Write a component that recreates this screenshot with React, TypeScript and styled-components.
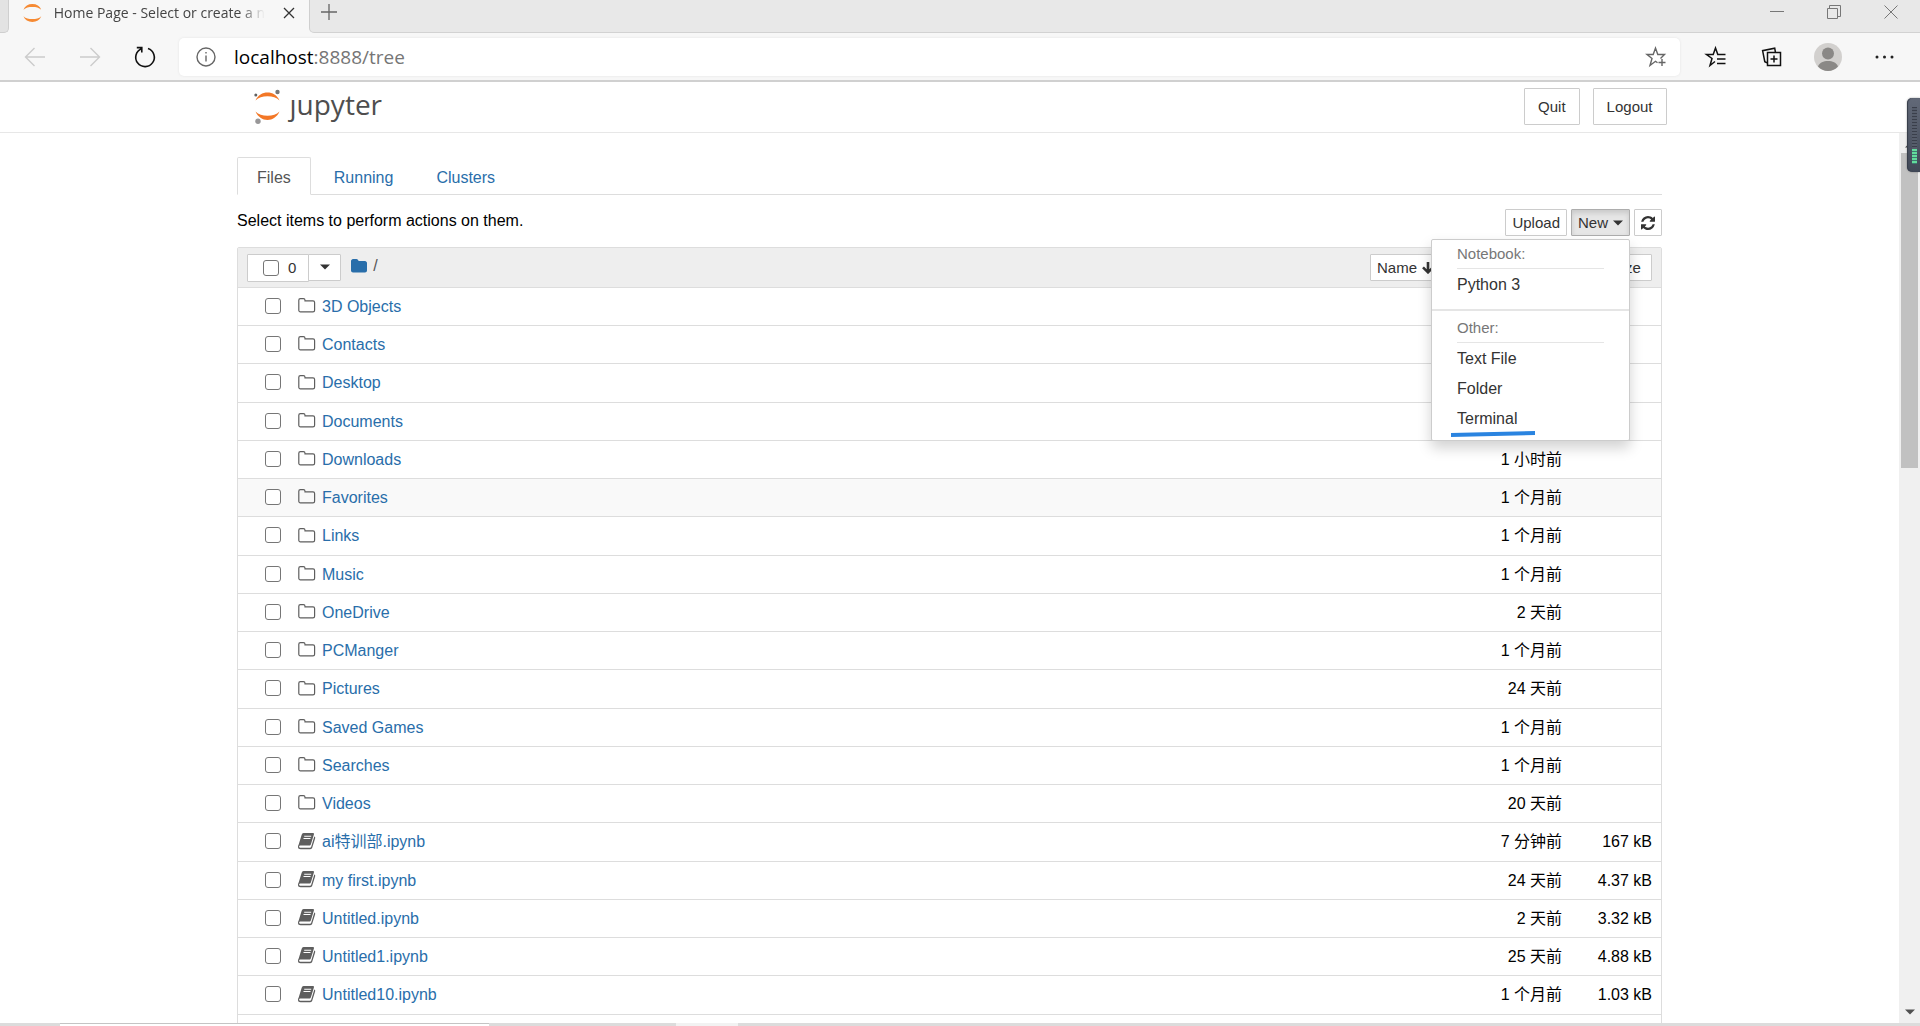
import React from 'react';
import styled, { createGlobalStyle, css } from 'styled-components';

const GlobalStyle = createGlobalStyle`
  *, *::before, *::after { box-sizing: border-box; }
  body {
    margin: 0;
    overflow: hidden;
    background: #fff;
    color: #000;
    font: 16px/24px "Liberation Sans", "Noto Sans CJK SC", Arial, sans-serif;
  }
  button { font: inherit; cursor: pointer; }
  a { color: #296eaa; text-decoration: none; }
`;

const BORDER = '#ddd';

const Window = styled.div`
  display: flex;
  flex-direction: column;
  height: 100vh;
  overflow: hidden;
`;

/* ---------- browser chrome ---------- */

const TabStrip = styled.div`
  display: flex;
  align-items: stretch;
  flex: none;
  height: 33px;
  background: #f7f7f7;
`;

const PreviousTab = styled.div`
  width: 9px;
  border-right: 1px solid #cfcfcf;
  border-bottom: 1px solid #cfcfcf;
  border-bottom-right-radius: 5px;
  background: #e3e3e3;
`;

const BrowserTab = styled.div`
  display: flex;
  align-items: center;
  gap: 12px;
  width: 300px;
  padding: 0 8px 8px 14px;
  background: #f7f7f7;
`;

const TabTitle = styled.span`
  flex: 1;
  white-space: nowrap;
  color: #444;
  font: 14px/24px "Open Sans", "Noto Sans", sans-serif;
  mask-image: linear-gradient(to right, #000 88%, transparent 100%);
`;

const StripRest = styled.div`
  display: flex;
  align-items: center;
  justify-content: space-between;
  flex: 1;
  padding: 0 17px 9px 10px;
  border-left: 1px solid #cfcfcf;
  border-bottom: 1px solid #d2d2d2;
  border-bottom-left-radius: 5px;
  background: #e8e8e8;
`;

const WindowControls = styled.div`
  display: flex;
  align-items: center;
  gap: 33px;
`;

const IconButton = styled.button<{ $size?: number }>`
  display: flex;
  align-items: center;
  justify-content: center;
  flex: none;
  width: ${(p) => p.$size ?? 24}px;
  height: ${(p) => p.$size ?? 24}px;
  padding: 0;
  border: 0;
  background: none;
`;

const NavBar = styled.div`
  display: flex;
  align-items: center;
  flex: none;
  height: 49px;
  padding: 0 22px 0 23px;
  border-bottom: 2px solid #d0d0d0;
  background: #f7f7f7;
`;

const NavButtons = styled.div`
  display: flex;
  gap: 31px;
  margin-right: 22px;
`;

const AddressBar = styled.label`
  display: flex;
  align-items: center;
  flex: 1;
  height: 38px;
  padding: 0 12px 0 15px;
  border-radius: 5px;
  background: #fff;
  box-shadow: 0 0 3px rgba(0, 0, 0, 0.08);
`;

const AddressText = styled.div`
  flex: 1;
  margin-left: 16px;
  color: #767676;
  font: 19px/28px "Open Sans", "Noto Sans", sans-serif;
`;

const Host = styled.span`
  color: #000;
`;

const ToolButtons = styled.div`
  display: flex;
  align-items: center;
  gap: 28px;
  margin-left: 22px;
`;

/* ---------- notebook page ---------- */

const Page = styled.div`
  display: flex;
  flex-direction: column;
  flex: 1;
  min-height: 0;
`;

const Header = styled.header`
  flex: none;
  height: 51px;
  border-bottom: 1px solid #e7e7e7;
`;

const HeaderInner = styled.div`
  display: flex;
  align-items: flex-start;
  gap: 13px;
  width: 1429px;
  max-width: 100%;
  margin: 0 auto;
  padding: 6px 8px 0;
`;

const LogoLink = styled.a`
  display: flex;
  margin-right: auto;
  color: #4e4e4e;
`;

const LogoText = styled.span`
  margin-left: 8px;
  color: #4e4e4e;
  font: 500 28px/32px "Open Sans", "Noto Sans", sans-serif;
`;

const Button = styled.button<{ $large?: boolean; $active?: boolean }>`
  display: inline-flex;
  align-items: center;
  justify-content: center;
  gap: 5px;
  height: ${(p) => (p.$large ? 37 : 27)}px;
  padding: 0 ${(p) => (p.$large ? 13 : 6)}px;
  border: 1px solid #ccc;
  border-radius: 1px;
  background: #fff;
  color: #333;
  font-size: 15px;
  white-space: nowrap;
  ${(p) =>
    p.$active &&
    css`
      border-color: #adadad;
      background: #e6e6e6;
      box-shadow: inset 0 3px 5px rgba(0, 0, 0, 0.125);
    `}
`;

const Site = styled.div`
  display: flex;
  flex: 1;
  min-height: 0;
  overflow: hidden;
`;

const Content = styled.main`
  flex: 1;
  min-width: 0;
`;

const Container = styled.div`
  width: 1425px;
  max-width: 100%;
  margin: 0 auto;
  padding-top: 24px;
`;

const TabList = styled.nav`
  display: flex;
  gap: 3px;
  height: 38px;
  border-bottom: 1px solid ${BORDER};
`;

const TabLink = styled.a<{ $active?: boolean }>`
  height: 38px;
  padding: 8px 19px 0;
  border: 1px solid transparent;
  border-radius: 2px 2px 0 0;
  ${(p) =>
    p.$active &&
    css`
      border-color: ${BORDER};
      border-bottom-color: #fff;
      background: #fff;
      color: #555;
    `}
`;

const Toolbar = styled.div`
  display: flex;
  align-items: flex-start;
  justify-content: space-between;
  height: 27px;
  margin: 14px 0 11px;
`;

const ToolbarButtons = styled.div`
  display: flex;
  gap: 4px;
`;

const MenuAnchor = styled.div`
  position: relative;
`;

const Menu = styled.div`
  position: absolute;
  top: 30px;
  right: 0;
  z-index: 2;
  width: 199px;
  padding: 0 0 7px;
  border: 1px solid #ccc;
  border-radius: 2px;
  background: #fff;
  box-shadow: 0 7px 14px rgba(0, 0, 0, 0.18);
`;

const MenuHeading = styled.div`
  height: 29px;
  margin: 0 25px;
  padding-top: 2px;
  border-bottom: 1px solid #e5e5e5;
  color: #777;
  font-size: 15px;
`;

const MenuDivider = styled.div`
  height: 2px;
  margin: 10px 0 3px;
  background: #e5e5e5;
`;

const MenuItem = styled.a`
  position: relative;
  display: block;
  height: 30px;
  padding: 4px 25px 0;
  color: #333;
`;

const Highlight = styled.svg`
  position: absolute;
  left: 19px;
  top: 28px;
`;

const FileTable = styled.table`
  width: 100%;
  table-layout: fixed;
  border-collapse: separate;
  border-spacing: 0;
  border: 1px solid ${BORDER};
  border-radius: 2px 2px 0 0;
`;

const HeadCell = styled.th<{ $width?: number }>`
  width: ${(p) => (p.$width ? `${p.$width}px` : 'auto')};
  height: 40px;
  padding: 0 9px 0 0;
  border-bottom: 1px solid ${BORDER};
  background: #eee;
  font-weight: normal;
  text-align: right;
`;

const HeadTools = styled.div`
  display: flex;
  align-items: center;
  padding-left: 9px;
`;

const SelectAll = styled.label`
  display: flex;
  align-items: center;
  gap: 9px;
  height: 28px;
  padding: 0 12px 0 15px;
  border: 1px solid #ccc;
  border-radius: 1px 0 0 1px;
  background: #fff;
  color: #333;
  font-size: 15px;
`;

const SelectMenu = styled(Button)`
  width: 33px;
  margin: 0 10px 1px -1px;
`;

const Crumb = styled.span`
  display: flex;
  align-items: center;
  gap: 6px;
  margin-right: auto;
  padding-bottom: 3px;
  color: #555;
`;

const Checkbox = styled.input.attrs({ type: 'checkbox' })`
  appearance: none;
  flex: none;
  width: 16px;
  height: 16px;
  margin: 0;
  border: 1px solid #767676;
  border-radius: 3px;
  background: #fff;
`;

const Row = styled.tr<{ $hover?: boolean }>`
  height: 38px;
  background: ${(p) => (p.$hover ? '#f9f9f9' : '#fff')};
  &:nth-child(4n + 3) {
    height: 39px;
  }
`;

const Cell = styled.td`
  padding: 0 9px 0 0;
  border-bottom: 1px solid ${BORDER};
  text-align: right;
  white-space: nowrap;
`;

const NameCell = styled.div`
  display: flex;
  align-items: center;
  padding-left: 27px;

  ${Checkbox} {
    margin-bottom: 2px;
  }
`;

const FileIcon = styled.svg`
  flex: none;
  width: 18px;
  height: 18px;
  margin: 0 6px 3px 17px;
`;

/* ---------- scroll bar and overlays ---------- */

const ScrollBar = styled.div`
  display: flex;
  flex-direction: column;
  align-items: center;
  justify-content: space-between;
  flex: none;
  width: 21px;
  padding: 9px 0 8px;
  background: #f0f0f0;
`;

const ScrollThumb = styled.div`
  width: 17px;
  height: 315px;
  margin: 5px 0 auto;
  background: #c1c1c1;
`;

const LevelMeter = styled.div`
  position: absolute;
  top: 98px;
  right: 0;
  z-index: 3;
  width: 13px;
  height: 74px;
  padding: 9px 3px 8px 5px;
  border-radius: 5px 0 0 5px;
  background: linear-gradient(#626978, #414857);
  box-shadow: inset 1px 0 1px #363c49, 0 0 2px rgba(0, 0, 0, 0.4);
`;

const LevelIdle = styled.div`
  height: 42px;
  background: repeating-linear-gradient(#3a3f4b 0 1px, #565d6b 1px 3px);
`;

const LevelLit = styled.div`
  height: 15px;
  background: repeating-linear-gradient(#62dc9c 0 2px, #3f7a70 2px 3px);
`;

const TaskEdge = styled.div`
  display: flex;
  flex: none;
  height: 3px;
  background: #dcdcdc;
`;

const TaskItem = styled.div<{ $grow: number; $tone: string; $line?: boolean }>`
  flex: ${(p) => p.$grow} 1 0;
  border-top: ${(p) => (p.$line ? '1px solid #c4c4c4' : '0')};
  background: ${(p) => p.$tone};
`;

/* ---------- icons ---------- */

const Line = ({ size = 24, color = '#111', w = 1, children }: {
  size?: number; color?: string; w?: number; children: React.ReactNode;
}) => (
  <svg width={size} height={size} viewBox={`0 0 ${size} ${size}`} fill="none" stroke={color} strokeWidth={w} aria-hidden>
    {children}
  </svg>
);

const Favicon = () => (
  <svg width="20" height="20" viewBox="0 0 20 20" fill="#f68a33" aria-hidden>
    <path d="M0.5 6.5C2 2.5 5.5.5 10 .5s8 2 9.500 6C17 4 14 3.500 10 3.500S3 4 .5 6.500z" />
    <path d="M.5 13.500c1.500 4 5 6 9.500 6s8-2 9.500-6c-2.500 2.500-5.500 3-9.500 3s-7-.5-9.500-3z" />
  </svg>
);

const JupyterMark = () => (
  <svg width="28" height="36" viewBox="0 0 28 36" aria-hidden>
    <path fill="#f37726" d="M1.500 12.500C4 7 8.500 4.500 13.500 4.500S23 7 25.500 12.500C22.500 9.500 18.500 8.300 13.500 8.300S4.500 9.500 1.500 12.500z" />
    <path fill="#f37726" d="M1.500 23.500C4 29 8.500 32 13.500 32s9.500-3 12-8.500C22.500 26.500 18.500 27.800 13.500 27.800S4.500 26.500 1.500 23.500z" />
    <circle cx="23.500" cy="4" r="2.200" fill="#767677" />
    <circle cx="1.800" cy="7" r="1.500" fill="#616161" />
    <circle cx="4" cy="33.300" r="2.700" fill="#989798" />
  </svg>
);

const Caret = ({ color = '#333' }: { color?: string }) => (
  <svg width="10" height="6" viewBox="0 0 10 6" aria-hidden><path fill={color} d="M0 0.500h10L5 5.500z" /></svg>
);

const FolderOpen = () => (
  <FileIcon viewBox="0 0 18 18" fill="none" stroke="#5e5e5e" strokeWidth="1.200" aria-hidden>
    <path d="M.8 14.200V4.200c0-.9.700-1.600 1.600-1.600h3c.9 0 1.600.7 1.600 1.600v.6h8c.9 0 1.600.7 1.600 1.600v7.800c0 .9-.7 1.600-1.600 1.600H2.400c-.9 0-1.600-.7-1.600-1.600z" />
  </FileIcon>
);

const Book = () => (
  <FileIcon viewBox="0 0 18 18" aria-hidden>
    <path fill="#5e5e5e" d="M5.600 1h9.300c.9 0 1.300.6 1 1.500l-3 9.700c-.2.800-.8 1.300-1.700 1.300H2.300c-.8 0-1.200.3-1.200.9 0 .9.700 1.300 1.700 1.300h9.200c.6 0 1-.3 1.200-.9l3.100-10.300c.9.400 1.100 1 .8 1.900l-2.800 9.200c-.3.900-1.100 1.600-2.100 1.600H2.600C1 17.200 0 16.200 0 14.900c0-1 .4-1.500.7-2.300L3.600 3C4 1.800 4.600 1 5.600 1z" />
    <path stroke="#fff" strokeWidth="1.100" d="M6.200 4.200h7M5.500 6.500h7" />
  </FileIcon>
);

const Refresh = () => (
  <svg width="14" height="14" viewBox="0 0 1536 1536" aria-hidden>
    <path fill="#333" d="M1511 928q0 5-1 7-64 268-268 434.500T764 1536q-146 0-282.500-55T238 1324l-129 129q-19 19-45 19t-45-19-19-45V960q0-26 19-45t45-19h448q26 0 45 19t19 45-19 45l-137 137q71 66 161 102t187 36q134 0 250-65t186-179q11-17 53-117 8-23 30-23h192q13 0 22.500 9.500t9.500 22.500zm25-800v448q0 26-19 45t-45 19h-448q-26 0-45-19t-19-45 19-45l138-138Q969 256 768 256q-134 0-250 65T332 500q-11 17-53 117-8 23-30 23H50q-13 0-22.500-9.500T18 608v-7q65-268 270-434.500T768 0q146 0 284 55.500T1297 212l130-129q19-19 45-19t45 19 19 45z" />
  </svg>
);

const files: { name: string; modified?: string; size?: string; hover?: boolean }[] = [
  { name: '3D Objects' },
  { name: 'Contacts' },
  { name: 'Desktop' },
  { name: 'Documents' },
  { name: 'Downloads', modified: '1 小时前' },
  { name: 'Favorites', modified: '1 个月前', hover: true },
  { name: 'Links', modified: '1 个月前' },
  { name: 'Music', modified: '1 个月前' },
  { name: 'OneDrive', modified: '2 天前' },
  { name: 'PCManger', modified: '1 个月前' },
  { name: 'Pictures', modified: '24 天前' },
  { name: 'Saved Games', modified: '1 个月前' },
  { name: 'Searches', modified: '1 个月前' },
  { name: 'Videos', modified: '20 天前' },
  { name: 'ai特训部.ipynb', modified: '7 分钟前', size: '167 kB' },
  { name: 'my first.ipynb', modified: '24 天前', size: '4.37 kB' },
  { name: 'Untitled.ipynb', modified: '2 天前', size: '3.32 kB' },
  { name: 'Untitled1.ipynb', modified: '25 天前', size: '4.88 kB' },
  { name: 'Untitled10.ipynb', modified: '1 个月前', size: '1.03 kB' },
];

const BrowserChrome = () => (
  <>
    <TabStrip>
      <PreviousTab />
      <BrowserTab>
        <Favicon />
        <TabTitle>Home Page - Select or create a n</TabTitle>
        <IconButton $size={24} aria-label="Close tab">
          <Line size={12} color="#333" w={1.3}><path d="M1 1l10 10M11 1L1 11" /></Line>
        </IconButton>
      </BrowserTab>
      <StripRest>
        <IconButton $size={18} aria-label="New tab">
          <Line size={18} color="#666" w={1.3}><path d="M9 1v16M1 9h16" /></Line>
        </IconButton>
        <WindowControls>
          <IconButton aria-label="Minimize"><Line size={14} color="#777"><path d="M0 6.500h14" /></Line></IconButton>
          <IconButton aria-label="Restore"><Line size={14} color="#777"><path d="M.5 3.500h10v10h-10zM2.500 3.500v-3h11v11h-3" /></Line></IconButton>
          <IconButton aria-label="Close"><Line size={14} color="#777"><path d="M.5.5l13 13M13.500.5l-13 13" /></Line></IconButton>
        </WindowControls>
      </StripRest>
    </TabStrip>
    <NavBar>
      <NavButtons>
        <IconButton aria-label="Back"><Line color="#ccc" w={1.4}><path d="M22 12H3M11.500 3L2.500 12l9 9" /></Line></IconButton>
        <IconButton aria-label="Forward"><Line color="#ccc" w={1.4}><path d="M2 12h19M12.500 3l9 9-9 9" /></Line></IconButton>
        <IconButton aria-label="Reload"><Line w={1.6}><path d="M15 3.500a9.300 9.300 0 1 1-6.500.2M3.800 2.600h5v5" /></Line></IconButton>
      </NavButtons>
      <AddressBar>
        <Line color="#666" w={1.4}><circle cx="12" cy="12" r="9" /><path d="M12 10.500v6M12 7v1.600" /></Line>
        <AddressText><Host>localhost</Host>:8888/tree</AddressText>
        <IconButton aria-label="Add to favorites">
          <Line color="#666" w={1.4}><path d="M16.500 13.500l4-4h-6.700L11.500 3 9.200 9.500H3l5 4-2 7 5.500-4.200 2 1.500M18 14v7M14.500 17.500h7" /></Line>
        </IconButton>
      </AddressBar>
      <ToolButtons>
        <IconButton $size={28} aria-label="Favorites">
          <Line w={1.5}><path d="M21.500 9.500h-7.700L11.500 3 9.200 9.500H2.500l5.500 4-2 7 5-4M13 14h8.500M13 18.500h8.500" /></Line>
        </IconButton>
        <IconButton $size={28} aria-label="Collections">
          <Line w={1.5}><path d="M7.500 7.500h13v13h-13zM14 10.500v7M10.500 14h7M15.500 7.500l-.8-4.300L2.600 5.700l2.200 11 2.700 1.500" /></Line>
        </IconButton>
        <IconButton $size={28} aria-label="Profile">
          <svg width="28" height="28" viewBox="0 0 28 28" aria-hidden>
            <circle cx="14" cy="14" r="14" fill="#d2d0ce" />
            <circle cx="14" cy="10.500" r="6" fill="#8a8886" />
            <path fill="#8a8886" d="M4 23.500c1.500-4 5.500-5.500 10-5.500s8.500 1.500 10 5.500A14 14 0 0 1 14 28a14 14 0 0 1-10-4.500z" />
          </svg>
        </IconButton>
        <IconButton $size={28} aria-label="More">
          <svg width="20" height="4" viewBox="0 0 20 4" fill="#222" aria-hidden>
            <circle cx="3" cy="2" r="1.500" /><circle cx="10.500" cy="2" r="1.500" /><circle cx="18" cy="2" r="1.500" />
          </svg>
        </IconButton>
      </ToolButtons>
    </NavBar>
  </>
);

const NewMenu = () => (
  <MenuAnchor>
    <Button $active aria-expanded="true">New <Caret /></Button>
    <Menu>
      <MenuHeading>Notebook:</MenuHeading>
      <MenuItem href="#python3">Python 3</MenuItem>
      <MenuDivider />
      <MenuHeading>Other:</MenuHeading>
      <MenuItem href="#text">Text File</MenuItem>
      <MenuItem href="#folder">Folder</MenuItem>
      <MenuItem href="#terminal">
        Terminal
        <Highlight width="84" height="6" viewBox="0 0 84 6" aria-hidden>
          <path fill="#2a84e0" d="M0 2L84 0v4L0 6z" />
        </Highlight>
      </MenuItem>
    </Menu>
  </MenuAnchor>
);

const FileList = () => (
  <FileTable>
    <thead>
      <tr>
        <HeadCell>
          <HeadTools>
            <SelectAll><Checkbox aria-label="Select all" />0</SelectAll>
            <SelectMenu aria-label="Selection options"><Caret /></SelectMenu>
            <Crumb>
              <svg width="16" height="14" viewBox="0 0 16 14" aria-hidden>
                <path fill="#296eaa" d="M0 2C0 1 1 0 2 0h3.500c1 0 2 1 2 2H14c1 0 2 1 2 2v7.500c0 1-1 2-2 2H2c-1 0-2-1-2-2z" />
              </svg>
              /
            </Crumb>
            <Button>
              Name
              <svg width="12" height="12" viewBox="0 0 12 12" fill="none" stroke="#333" strokeWidth="2.600" aria-hidden>
                <path d="M6 0v10M1 5.300l5 5 5-5" />
              </svg>
            </Button>
          </HeadTools>
        </HeadCell>
        <HeadCell $width={121}><Button>Last Modified</Button></HeadCell>
        <HeadCell $width={90}><Button>File size&nbsp;</Button></HeadCell>
      </tr>
    </thead>
    <tbody>
      {files.map((file) => (
        <Row key={file.name} $hover={file.hover}>
          <Cell>
            <NameCell>
              <Checkbox aria-label={file.name} />
              {file.name.endsWith('.ipynb') ? <Book /> : <FolderOpen />}
              <a href="#file">{file.name}</a>
            </NameCell>
          </Cell>
          <Cell>{file.modified}</Cell>
          <Cell>{file.size}</Cell>
        </Row>
      ))}
      <Row><Cell /><Cell /><Cell /></Row>
    </tbody>
  </FileTable>
);

export default function App() {
  return (
    <Window>
      <GlobalStyle />
      <BrowserChrome />
      <Page>
        <Header>
          <HeaderInner>
            <LogoLink href="#home" aria-label="jupyter">
              <JupyterMark />
              <LogoText>ȷupyter</LogoText>
            </LogoLink>
            <Button $large>Quit</Button>
            <Button $large>Logout</Button>
          </HeaderInner>
        </Header>
        <Site>
          <Content>
            <Container>
              <TabList>
                <TabLink href="#files" $active>Files</TabLink>
                <TabLink href="#running">Running</TabLink>
                <TabLink href="#clusters">Clusters</TabLink>
              </TabList>
              <Toolbar>
                <span>Select items to perform actions on them.</span>
                <ToolbarButtons>
                  <Button>Upload</Button>
                  <NewMenu />
                  <Button aria-label="Refresh"><Refresh /></Button>
                </ToolbarButtons>
              </Toolbar>
              <FileList />
            </Container>
          </Content>
          <ScrollBar>
            <svg width="10" height="6" viewBox="0 0 10 6" aria-hidden><path fill="#505050" d="M5 .5l5 5H0z" /></svg>
            <ScrollThumb />
            <Caret color="#505050" />
          </ScrollBar>
        </Site>
      </Page>
      <TaskEdge>
        <TaskItem $grow={60} $tone="#dcdcdc" />
        <TaskItem $grow={429} $tone="#fff" $line />
        <TaskItem $grow={187} $tone="#dcdcdc" />
        <TaskItem $grow={62} $tone="#f2f2f2" />
        <TaskItem $grow={1182} $tone="#dcdcdc" />
      </TaskEdge>
      <LevelMeter><LevelIdle /><LevelLit /></LevelMeter>
    </Window>
  );
}
